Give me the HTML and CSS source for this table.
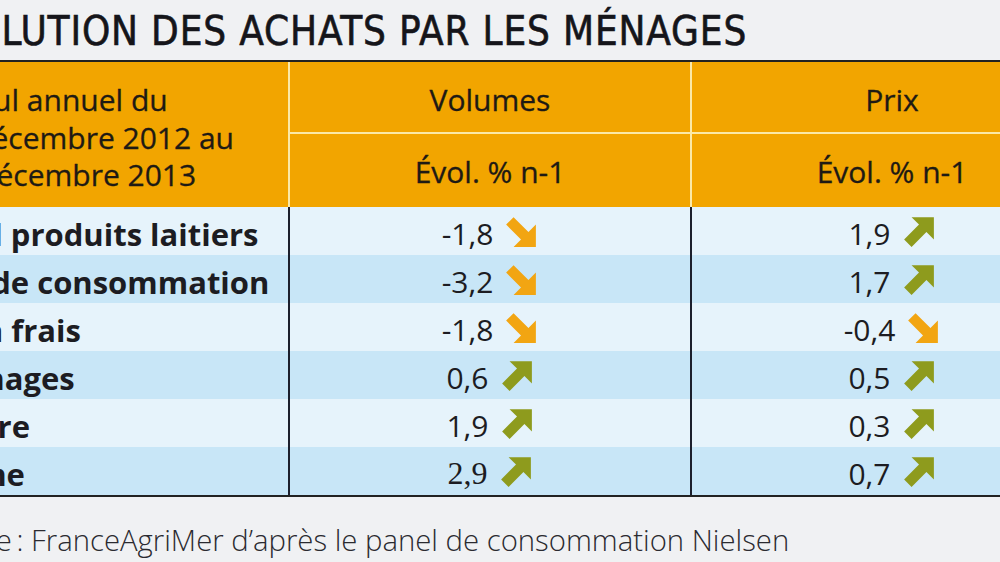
FILE: index.html
```html
<!DOCTYPE html>
<html lang="fr">
<head>
<meta charset="utf-8">
<title>Évolution des achats par les ménages</title>
<link rel="stylesheet" href="styles.css">
</head>
<body>
<div class="page">
  <h1 class="title"><span class="title-text">ÉVOLUTION DES ACHATS PAR LES MÉNAGES</span></h1>
  <div class="grid">
    <div class="hcell hlabel">
      <span class="hl hl1">Cumul annuel du</span>
      <span class="hl hl2">30 décembre 2012 au</span>
      <span class="hl hl3">29 décembre 2013</span>
    </div>
    <div class="hcell htop">Volumes</div>
    <div class="hcell htop hlast">Prix</div>
    <div class="hcell hsub">Évol. % n-1</div>
    <div class="hcell hsub hlast">Évol. % n-1</div>

    <div class="cell label light"><span class="lbl">Total produits laitiers</span></div>
    <div class="cell val light">-1,8 <svg class="arr down" viewBox="0 0 32 32"><use href="#arrow"/></svg></div>
    <div class="cell val light last">1,9 <svg class="arr up" viewBox="0 0 32 32"><use href="#arrow"/></svg></div>

    <div class="cell label dark"><span class="lbl">Lait de consommation</span></div>
    <div class="cell val dark">-3,2 <svg class="arr down" viewBox="0 0 32 32"><use href="#arrow"/></svg></div>
    <div class="cell val dark last">1,7 <svg class="arr up" viewBox="0 0 32 32"><use href="#arrow"/></svg></div>

    <div class="cell label light"><span class="lbl">Ultra frais</span></div>
    <div class="cell val light">-1,8 <svg class="arr down" viewBox="0 0 32 32"><use href="#arrow"/></svg></div>
    <div class="cell val light last">-0,4 <svg class="arr down" viewBox="0 0 32 32"><use href="#arrow"/></svg></div>

    <div class="cell label dark"><span class="lbl">Fromages</span></div>
    <div class="cell val dark">0,6 <svg class="arr up" viewBox="0 0 32 32"><use href="#arrow"/></svg></div>
    <div class="cell val dark last">0,5 <svg class="arr up" viewBox="0 0 32 32"><use href="#arrow"/></svg></div>

    <div class="cell label light"><span class="lbl">Beurre</span></div>
    <div class="cell val light">1,9 <svg class="arr up" viewBox="0 0 32 32"><use href="#arrow"/></svg></div>
    <div class="cell val light last">0,3 <svg class="arr up" viewBox="0 0 32 32"><use href="#arrow"/></svg></div>

    <div class="cell label dark"><span class="lbl">Crème</span></div>
    <div class="cell val dark"><span class="serif">2,9</span> <svg class="arr up" viewBox="0 0 32 32"><use href="#arrow"/></svg></div>
    <div class="cell val dark last">0,7 <svg class="arr up" viewBox="0 0 32 32"><use href="#arrow"/></svg></div>
  </div>
  <p class="source"><span class="src-text"><span class="src-lead">Source :</span> FranceAgriMer d’après le panel de consommation Nielsen</span></p>
</div>
<svg width="0" height="0" class="defs">
  <defs>
    <polygon id="arrow" points="9,2 30,2 30,23 23,16 9,30 2,23 16,9"/>
  </defs>
</svg>
</body>
</html>
```
FILE: styles.css
```css
html, body {
  margin: 0;
  padding: 0;
}
body {
  width: 1000px;
  height: 562px;
  overflow: hidden;
  background: #f0f1f3;
  font-family: "Open Sans", Lato, sans-serif;
  color: #1c1c22;
}
.page {
  width: 1000px;
  overflow: hidden;
}
.title {
  margin: 0;
  height: 60px;
  overflow: hidden;
  white-space: nowrap;
  font-family: "DejaVu Sans Condensed", "DejaVu Sans", sans-serif;
  font-stretch: condensed;
  font-weight: normal;
  font-size: 40px;
  letter-spacing: 0.85px;
  line-height: 62px;
  color: #15151a;
  -webkit-text-stroke: 0.6px #15151a;
}
.title-text {
  display: inline-block;
  margin-left: -76px;
}
.grid {
  display: grid;
  grid-template-columns: 288px 402px 402px;
  grid-template-rows: 72px 73px repeat(6, 48px);
  width: 1092px;
  border-top: 2px solid #222;
  border-bottom: 2px solid #222;
  background: #f2a500;
}
.hcell {
  background: #f2a500;
  display: flex;
  align-items: center;
  justify-content: center;
  font-size: 30px;
  font-weight: 500;
  color: #1e1a14;
  -webkit-text-stroke: 0.3px #1e1a14;
}
.hlabel {
  grid-row: 1 / span 2;
  flex-direction: column;
  align-items: flex-start;
  justify-content: center;
  overflow: hidden;
  white-space: nowrap;
  line-height: 37.5px;
  padding-top: 6px;
  box-sizing: border-box;
}
.hl { display: block; }
.hl1 { margin-left: -72px; }
.hl2 { margin-left: -69px; }
.hl3 { margin-left: -64px; }
.htop {
  border-left: 2px solid #fbe9a8;
  border-bottom: 2px solid #fbe9a8;
  padding-top: 4px;
}
.hsub {
  border-left: 2px solid #fbe9a8;
  padding-top: 2px;
}
.cell {
  display: flex;
  align-items: center;
  font-size: 30px;
  white-space: nowrap;
  overflow: hidden;
  padding-top: 5px;
}
.light { background: #e6f3fb; }
.dark { background: #c8e6f7; }
.label {
  font-weight: bold;
  font-size: 31px;
}
.lbl { margin-left: -76px; }
.val {
  justify-content: center;
  border-left: 2px solid #1c1f2c;
  gap: 11px;
}
.serif {
  font-family: "Liberation Serif", serif;
  font-size: 32px;
}
.arr {
  width: 34px;
  height: 34px;
  margin-top: -3px;
}
.arr.up { fill: #8e9b1d; }
.arr.down { fill: #f2a512; transform: scaleY(-1); }
.defs { position: absolute; }
.source {
  margin: 0;
  height: 64px;
  white-space: nowrap;
  overflow: hidden;
  font-family: "Open Sans", sans-serif;
  font-weight: 300;
  font-size: 29.3px;
  line-height: 86px;
  color: #2a2a30;
}
.src-text {
  display: inline-block;
  margin-left: -80px;
}
.src-lead {
  word-spacing: -3px;
}
```
